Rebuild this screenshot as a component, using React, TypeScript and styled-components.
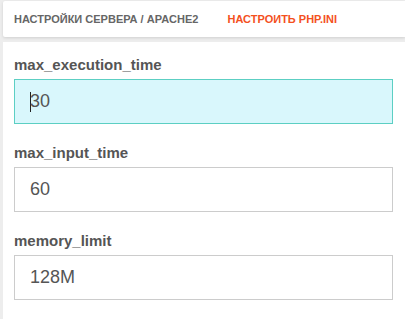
import React from "react";
import styled, { createGlobalStyle } from "styled-components";

const GlobalStyle = createGlobalStyle`
  html, body {
    margin: 0;
    padding: 0;
    background: #ededed;
    font-family: "Liberation Sans", Arial, sans-serif;
  }
`;

const Page = styled.div`
  width: 405px;
  height: 319px;
  overflow: hidden;
  padding: 1px 0 0 3px;
  box-sizing: border-box;
  display: flex;
  flex-direction: column;
  gap: 5px;
`;

const Header = styled.div`
  background: #fff;
  height: 36px;
  display: flex;
  align-items: center;
  gap: 29px;
  padding-left: 11px;
  box-shadow: 0 1px 3px rgba(0, 0, 0, 0.12);
  border-radius: 2px 0 0 2px;
`;

const Crumb = styled.span<{ $active?: boolean }>`
  font-size: 11px;
  font-weight: bold;
  text-transform: uppercase;
  color: ${(p) => (p.$active ? "#f4511e" : "#666")};
`;

const Body = styled.div`
  background: #fff;
  flex: 1;
  padding: 14px 12px 0 11px;
  display: flex;
  flex-direction: column;
  gap: 20px;
`;

const Field = styled.div`
  display: flex;
  flex-direction: column;
  gap: 6px;
`;

const Label = styled.label`
  font-size: 15px;
  font-weight: bold;
  color: #555;
  line-height: 17px;
`;

const InputBox = styled.div<{ $focused?: boolean }>`
  height: 45px;
  box-sizing: border-box;
  border: 1px solid ${(p) => (p.$focused ? "#5ccfc3" : "#ccc")};
  background: ${(p) => (p.$focused ? "#d9f7fc" : "#fff")};
  display: flex;
  align-items: center;
  padding-left: 15px;
  font-size: 18px;
  color: #555;
`;

const Caret = styled.span`
  display: inline-block;
  width: 1px;
  height: 20px;
  background: #222;
  margin-right: -1px;
`;

const fields = [
  { name: "max_execution_time", value: "30", focused: true },
  { name: "max_input_time", value: "60" },
  { name: "memory_limit", value: "128M" },
];

export default function App() {
  return (
    <>
      <GlobalStyle />
      <Page>
        <Header>
          <Crumb>Настройки сервера / apache2</Crumb>
          <Crumb $active>Настроить php.ini</Crumb>
        </Header>
        <Body>
          {fields.map((f) => (
            <Field key={f.name}>
              <Label>{f.name}</Label>
              <InputBox $focused={f.focused}>
                {f.focused && <Caret />}
                {f.value}
              </InputBox>
            </Field>
          ))}
        </Body>
      </Page>
    </>
  );
}
